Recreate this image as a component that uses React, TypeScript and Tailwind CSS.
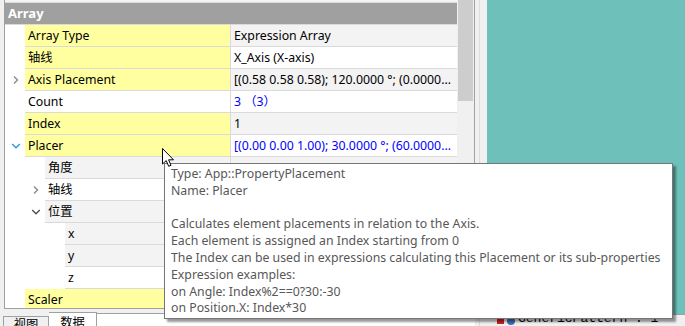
import React from "react";

type Row = {
  name: string;
  value?: string;
  level: 0 | 1 | 2;
  yellow?: boolean;
  alt?: boolean;
  chevron?: "right" | "down" | "downBlue";
  blue?: boolean;
};

const rows: Row[] = [
  { name: "Array Type", value: "Expression Array", level: 0, yellow: true, alt: true },
  { name: "轴线", value: "X_Axis (X-axis)", level: 0, yellow: true },
  { name: "Axis Placement", value: "[(0.58 0.58 0.58); 120.0000 °; (0.0000...", level: 0, yellow: true, alt: true, chevron: "right" },
  { name: "Count", value: "3 （3）", level: 0, blue: true },
  { name: "Index", value: "1", level: 0, yellow: true, alt: true },
  { name: "Placer", value: "[(0.00 0.00 1.00); 30.0000 °; (60.0000...", level: 0, yellow: true, chevron: "downBlue", blue: true },
  { name: "角度", level: 1, alt: true },
  { name: "轴线", level: 1, chevron: "right" },
  { name: "位置", level: 1, alt: true, chevron: "down" },
  { name: "x", level: 2, alt: true },
  { name: "y", level: 2, alt: true },
  { name: "z", level: 2 },
  { name: "Scaler", level: 0, yellow: true, alt: true },
];

const indentW = ["w-[20px]", "w-[40px]", "w-[60px]"];
const nameW = ["w-[206px]", "w-[186px]", "w-[166px]"];

function Chevron({ kind }: { kind: "right" | "down" | "downBlue" }) {
  if (kind === "right") {
    return (
      <svg width="8" height="10" viewBox="0 0 8 10">
        <path d="M2 1.5 L5.5 5 L2 8.5" fill="none" stroke="#8a8a8a" strokeWidth="1.4" />
      </svg>
    );
  }
  const color = kind === "downBlue" ? "#2c9ad8" : "#505050";
  return (
    <svg width="10" height="8" viewBox="0 0 10 8">
      <path d="M1.2 2 L5 5.8 L8.8 2" fill="none" stroke={color} strokeWidth="1.4" />
    </svg>
  );
}

function PropRow({ r }: { r: Row }) {
  return (
    <div className="flex h-[22px] shrink-0">
      <div className={`${indentW[r.level]} shrink-0 bg-white flex justify-end`}>
        <div className="w-[20px] h-full flex items-center justify-center pl-[1px]">
          {r.chevron ? <Chevron kind={r.chevron} /> : null}
        </div>
      </div>
      <div className={`flex-1 flex border-b border-[#dadada] ${r.alt ? "bg-[#f3f3f3]" : "bg-white"}`}>
        <div
          className={`${nameW[r.level]} shrink-0 border-r border-[#dadada] pl-[3px] leading-[21px] text-black ${
            r.yellow ? "bg-[#ffffa0]" : ""
          }`}
        >
          {r.name}
        </div>
        <div
          className={`flex-1 pl-[3px] leading-[21px] whitespace-nowrap overflow-hidden ${
            r.blue ? "text-[#0000ff]" : "text-black"
          }`}
        >
          {r.value ?? ""}
        </div>
      </div>
    </div>
  );
}

function Cursor() {
  return (
    <svg width="13" height="20" viewBox="0 0 13 20" className="absolute left-[162px] top-[148px]">
      <path
        d="M0.5 0.5 L0.5 16 L4.2 12.6 L6.7 18.3 L9 17.3 L6.6 11.8 L11.5 11.8 Z"
        fill="white"
        stroke="black"
        strokeWidth="1"
        strokeLinejoin="miter"
      />
    </svg>
  );
}

export default function App() {
  return (
    <div className="relative w-[685px] h-[326px] overflow-hidden flex bg-[#f0f0f0] font-['Noto_Sans','Noto_Sans_CJK_SC',sans-serif] text-[12.3px]">
      {/* Left: property grid */}
      <div className="w-[475px] shrink-0 flex flex-col">
        <div className="ml-[4px] h-[309px] flex border-l border-r border-b border-[#a0a0a0] bg-white">
          <div className="w-[452px] h-[308px] overflow-hidden flex flex-col">
            <div className="h-[3px] shrink-0 border-b border-[#dadada] bg-[#f3f3f3]" />
            <div className="h-[22px] shrink-0 bg-[#a0a0a0] border-b border-[#dadada] pl-[3px] leading-[21px] text-white font-bold text-[13px]">
              Array
            </div>
            {rows.map((r, i) => (
              <PropRow key={i} r={r} />
            ))}
          </div>
          <div className="w-[17px] h-[308px] bg-[#f0f0f0] flex justify-center">
            <div className="w-[15px] h-[101px] bg-[#cdcdcd]" />
          </div>
        </div>
        {/* tabs */}
        <div className="flex-1 flex items-start pl-[3px]">
          <div className="mt-[7px] w-[46px] h-[20px] border border-[#a0a0a0] bg-[#f0f0f0] text-center leading-[14px] text-black font-['Noto_Sans_CJK_SC',sans-serif]">
            视图
          </div>
          <div className="mt-[3px] w-[48px] h-[20px] border border-[#a0a0a0] border-l-0 bg-white text-center leading-[18px] text-black font-['Noto_Sans_CJK_SC',sans-serif]">
            数据
          </div>
          <div className="mt-[4px] flex-1 h-[20px] border-t border-[#a0a0a0] bg-white" />
        </div>
      </div>

      {/* splitter strip */}
      <div className="w-[12px] shrink-0 bg-[#f0f0f0] flex">
        <div className="w-[4px]" />
        <div className="w-[1px] bg-[#dcdcdc]" />
      </div>

      {/* 3D view */}
      <div className="flex-1 flex flex-col">
        <div className="h-[318px] bg-[#6dc1ba]" />
        <div className="flex-1 border-t border-[#a0a0a0] bg-[#f0f0f0] flex items-start pl-[10px] gap-[3px]">
          <div className="mt-[2px] w-[7px] h-[7px] bg-[#d42020]" />
          <div className="mt-[2px] w-[8px] h-[8px] rounded-full bg-[#3d6fb8]" />
          <div className="-mt-[3px] font-['Liberation_Mono',monospace] text-[13px] leading-[14px] text-black">
            GenericPattern : 1
          </div>
        </div>
      </div>

      {/* tooltip */}
      <div className="absolute left-[164px] top-[163px] w-[509px] h-[156px] border border-[#767676] bg-white shadow-[3px_3px_2px_rgba(0,0,0,0.4)] pl-[6px] pt-[2px] text-[#575757] leading-[16.8px] whitespace-nowrap">
        <div>Type: App::PropertyPlacement</div>
        <div>Name: Placer</div>
        <div>&nbsp;</div>
        <div>Calculates element placements in relation to the Axis.</div>
        <div>Each element is assigned an Index starting from 0</div>
        <div>The Index can be used in expressions calculating this Placement or its sub-properties</div>
        <div>Expression examples:</div>
        <div>on Angle: Index%2==0?30:-30</div>
        <div>on Position.X: Index*30</div>
      </div>

      <Cursor />
    </div>
  );
}
